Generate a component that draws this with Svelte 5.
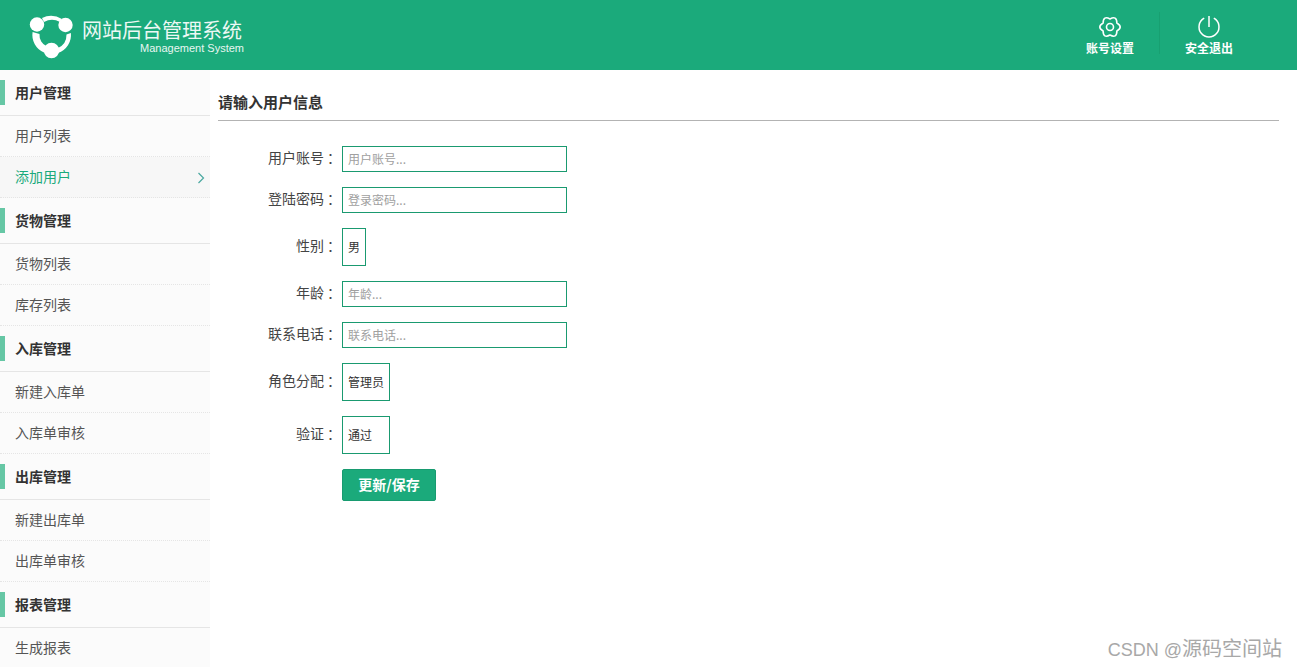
<script>
  const groups = [
    { title: '用户管理', items: ['用户列表', '添加用户'] },
    { title: '货物管理', items: ['货物列表', '库存列表'] },
    { title: '入库管理', items: ['新建入库单', '入库单审核'] },
    { title: '出库管理', items: ['新建出库单', '出库单审核'] },
    { title: '报表管理', items: ['生成报表'] }
  ];
  const active = '添加用户';
</script>

<div class="page">
  <header class="top">
    <div class="brand">
      <svg class="logo" width="46" height="46" viewBox="0 0 46 46" aria-hidden="true">
        <circle cx="8" cy="11.500" r="7.200" fill="#fff" />
        <circle cx="36.500" cy="12" r="7.200" fill="#fff" />
        <circle cx="22.500" cy="37.500" r="7.800" fill="#fff" />
        <path d="M13 5 Q23 0 33 6 L31 9 Q23 4.500 15 9Z" fill="#fff" />
        <path d="M3.600 19 A19 19 0 0 0 15 39.500 L18 33.500 A12.500 12.500 0 0 1 10.500 21Z" fill="#fff" />
        <path d="M41.900 20 A19 19 0 0 1 29 40 L29 35 A14.500 14.500 0 0 0 37.500 21.500Z" fill="#fff" />
      </svg>
      <div class="brand-text">
        <div class="brand-cn">网站后台管理系统</div>
        <div class="brand-en">Management System</div>
      </div>
    </div>
    <div class="actions">
      <div class="action">
        <svg width="24" height="22" viewBox="0 0 24 22" fill="none" stroke="#fff" stroke-width="1.600" aria-hidden="true">
          <path d="M18.900 7 Q18.750 -0.700 12 3 Q5.250 -0.700 5.100 7 Q-1.500 11 5.100 15 Q5.250 22.700 12 19 Q18.750 22.700 18.900 15 Q25.500 11 18.900 7Z" stroke-linejoin="round" />
          <circle cx="12" cy="11" r="3.500" />
        </svg>
        <span>账号设置</span>
      </div>
      <div class="action power">
        <svg width="22" height="22" viewBox="0 0 22 22" fill="none" stroke="#fff" stroke-width="1.500" aria-hidden="true">
          <path d="M6.200 2.200 A10 10 0 1 0 15.800 2.200" />
          <path d="M11 0 V11" />
        </svg>
        <span>安全退出</span>
      </div>
    </div>
  </header>

  <div class="body">
    <nav class="side">
      {#each groups as g}
        <div class="group-title"><i class="mark"></i>{g.title}</div>
        {#each g.items as item}
          <div class="item" class:active={item === active}>
            {item}
            {#if item === active}
              <svg class="chev" width="8" height="12" viewBox="0 0 8 12" fill="none" stroke="#4aa8a0" stroke-width="1.200" aria-hidden="true"><path d="M1.500 1 L6.500 6 L1.500 11" /></svg>
            {/if}
          </div>
        {/each}
      {/each}
    </nav>

    <main class="main">
      <h2 class="title">请输入用户信息</h2>
      <form class="form">
        <div class="row"><span class="label">用户账号<b>：</b></span><input placeholder="用户账号..." /></div>
        <div class="row"><span class="label">登陆密码<b>：</b></span><input placeholder="登录密码..." /></div>
        <div class="row"><span class="label">性别<b>：</b></span><div class="select w-s">男</div></div>
        <div class="row"><span class="label">年龄<b>：</b></span><input placeholder="年龄..." /></div>
        <div class="row"><span class="label">联系电话<b>：</b></span><input placeholder="联系电话..." /></div>
        <div class="row"><span class="label">角色分配<b>：</b></span><div class="select w-m">管理员</div></div>
        <div class="row"><span class="label">验证<b>：</b></span><div class="select w-m">通过</div></div>
        <div class="row"><span class="label"></span><button type="button" class="save">更新/保存</button></div>
      </form>
    </main>
  </div>
  <div class="watermark"><span class="wm-latin">CSDN @</span>源码空间站</div>
</div>

<style>
  :global(html), :global(body) { margin: 0; height: 100%; overflow: hidden; background: #fff; }
  .page {
    position: relative;
    height: 667px;
    overflow: hidden;
    font-family: "Noto Sans CJK SC", "Liberation Sans", sans-serif;
    color: #333;
    font-size: 14px;
  }
  .top {
    height: 70px;
    background: #1baa7b;
    display: flex;
    justify-content: space-between;
    align-items: stretch;
    color: #fff;
  }
  .brand { display: flex; align-items: center; padding-left: 29px; gap: 7px; }
  .logo { display: block; margin-top: 2px; overflow: visible; }
  .brand-text { width: 162px; }
  .brand-cn { font-size: 20px; line-height: 26px; opacity: .92; white-space: nowrap; }
  .brand-en { font-family: "Liberation Sans", sans-serif; font-size: 11px; line-height: 10px; text-align: right; opacity: .9; }
  .actions { display: flex; padding: 12px 39px 0 0; }
  .action {
    width: 98px;
    height: 42px;
    display: flex;
    flex-direction: column;
    align-items: center;
    font-size: 12px;
    font-weight: 700;
    line-height: 16px;
    white-space: nowrap;
  }
  .action svg { display: block; margin: 4px 0 2px; height: 22px; flex: none; overflow: visible; }
  .action.power { border-left: 1px solid #18a071; }
  .body { display: flex; align-items: flex-start; }
  .side { width: 210px; flex: none; background: #fbfbfb; }
  .group-title {
    display: flex;
    align-items: flex-start;
    height: 25px;
    line-height: 25px;
    padding: 10px 0;
    border-bottom: 1px solid #e5e5e5;
    font-weight: 700;
    color: #333;
  }
  .mark { width: 5px; height: 25px; background: #66c7a5; margin-right: 10px; }
  .item {
    position: relative;
    height: 40px;
    line-height: 38px;
    padding-left: 15px;
    border-bottom: 1px dotted #e5e5e5;
    color: #555;
  }
  .item.active { color: #1baa7b; background: #f7f7f7; }
  .chev { position: absolute; right: 5px; top: 15px; }
  .main { flex: 1; padding: 0 18px 0 8px; min-width: 0; }
  .title {
    margin: 0;
    height: 50px;
    line-height: 64px;
    font-size: 15px;
    font-weight: 700;
    border-bottom: 1px solid #b3b3b3;
  }
  .form { padding-top: 25px; }
  .row { display: flex; align-items: center; margin-bottom: 15px; }
  .label {
    width: 121px;
    margin-right: 3px;
    padding-bottom: 4px;
    text-align: right;
    font-size: 14px;
    color: #444;
    flex: none;
    line-height: 20px;
  }
  .label b { display: inline-block; width: 15px; font-weight: 400; text-align: center; text-indent: 3px; }
  input {
    box-sizing: border-box;
    width: 225px;
    height: 26px;
    border: 1px solid #1a9a70;
    padding: 0 5px 2px;
    font: 12px "Noto Sans CJK SC", "Liberation Sans", sans-serif;
    color: #333;
    outline: none;
    border-radius: 0;
  }
  input::placeholder { color: #a0a0a0; opacity: 1; }
  .select {
    box-sizing: border-box;
    height: 38px;
    line-height: 36px;
    border: 1px solid #1a9a70;
    padding-left: 5px;
    font-size: 12px;
    color: #333;
  }
  .w-s { width: 24px; }
  .w-m { width: 48px; }
  .save {
    width: 94px;
    height: 32px;
    background: #1baa7b;
    color: #fff;
    border: 1px solid #189b70;
    border-radius: 2px;
    font: 700 14px "Noto Sans CJK SC", "Liberation Sans", sans-serif;
    padding: 0 0 2px;
  }
  .watermark {
    position: absolute;
    right: 15px;
    top: 634px;
    font-family: "Noto Sans CJK SC", "Liberation Sans", sans-serif;
    font-size: 20px;
    line-height: 28px;
    color: #a8a8a8;
    white-space: nowrap;
  }
  .wm-latin { font-family: "Liberation Sans", sans-serif; font-size: 18px; }
</style>
